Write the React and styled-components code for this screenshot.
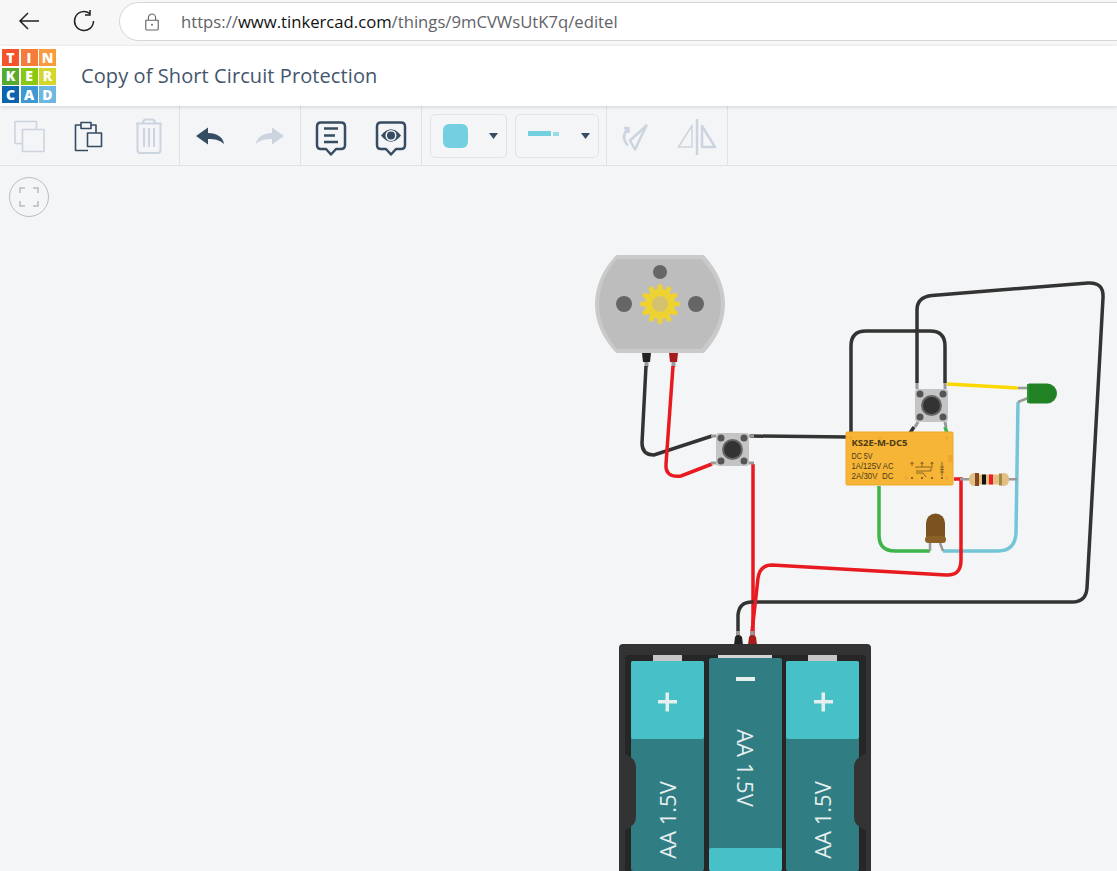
import React from "react";
import styled, { createGlobalStyle } from "styled-components";

const GlobalStyle = createGlobalStyle`
  html, body { margin: 0; padding: 0; background: #f3f5f7; }
  body { font-family: "Open Sans", "Noto Sans", sans-serif; overflow: hidden; }
`;

const LOGO = [
  ["T", "#f4532d"], ["I", "#f57d3c"], ["N", "#f99a3d"],
  ["K", "#56ab2f"], ["E", "#8cc811"], ["R", "#d3d62b"],
  ["C", "#0a64ae"], ["A", "#3d98d3"], ["D", "#6cb8e0"],
];

// wires of the circuit, page coordinates
const WIRES = [
  { c: "#333", d: "M646 366 L642 443 Q642 455 654 455 L712 436" },
  { c: "#e8191f", d: "M673 366 L666 464 Q665 478 681 476 L712 464" },
  { c: "#333", d: "M750 436 L848 437" },
  { c: "#e8191f", d: "M753 464 L753 636" },
  { c: "#333", d: "M851 433 L851 346 Q851 331 866 331 L930 331 Q945 331 945 346 L945 383" },
  { c: "#333", d: "M917 383 L917 310 Q917 297 932 295.500 L1088 283 Q1104 282 1103 298 L1087 588 Q1086 602 1072 602 L752 602 Q739 602 738 615 L738 632" },
  { c: "#333", d: "M914 427 L910 433" },
  { c: "#3db54a", d: "M945 427 L947 433" },
  { c: "#fdd800", d: "M947 384 L1018 388" },
  { c: "#74c5d8", d: "M1018 402 L1016 533 Q1015 551 998 551 L943 551" },
  { c: "#3db54a", d: "M879 486 L879 535 Q879 551 895 551 L930 551" },
  { c: "#e8191f", d: "M954 479 L961 479 L961 560 Q961 576 946 575 L772 565 Q760 565 758 578 L752 632" },
];

const RELAY_LINES = [
  ["DC 5V", 21],
  ["1A/125V AC", 42],
  ["2A/30V  DC", 42],
];

const RELAY_PINS = [[851, 438], [880, 438], [947, 438], [906, 478], [947, 478], [876, 478]];

const Gear = () => (
  <g>
    {Array.from({ length: 12 }, (_, i) => {
      const a = (i * Math.PI) / 6 + Math.PI / 2;
      return (
        <line
          key={i}
          x1={660 + Math.cos(a) * 13}
          y1={304 + Math.sin(a) * 13}
          x2={660 + Math.cos(a) * 17.500}
          y2={304 + Math.sin(a) * 17.500}
          stroke="#eed232"
          strokeWidth="5"
          strokeLinecap="round"
        />
      );
    })}
    <circle cx="660" cy="304" r="15" fill="#eed232" />
    <circle cx="660" cy="304" r="8" fill="#d3c270" />
  </g>
);

const PushButton = ({ x, y, vertical }) => (
  <g>
    {vertical ? (
      <path
        d={`M${x + 2} ${y - 6} V${y} M${x + 30} ${y - 6} V${y} M${x + 3} ${y + 33} L${x} ${y + 38} M${x + 30} ${y + 33} L${x + 31} ${y + 38}`}
        stroke="#999"
        strokeWidth="3"
      />
    ) : (
      <path
        d={`M${x - 5} ${y + 3} H${x} M${x + 33} ${y + 3} H${x + 38} M${x - 5} ${y + 30} H${x} M${x + 33} ${y + 30} H${x + 38}`}
        stroke="#999"
        strokeWidth="3"
      />
    )}
    <rect x={x} y={y} width="33" height="33" rx="3" fill="#c4c4c4" />
    <circle cx={x + 5} cy={y + 5} r="3.500" fill="#555" />
    <circle cx={x + 28} cy={y + 5} r="3.500" fill="#555" />
    <circle cx={x + 5} cy={y + 28} r="3.500" fill="#555" />
    <circle cx={x + 28} cy={y + 28} r="3.500" fill="#555" />
    <circle cx={x + 16.5} cy={y + 16.5} r="10.500" fill="#666" />
    <circle cx={x + 16.5} cy={y + 16.5} r="8.500" fill="#333" />
  </g>
);

const Cell = ({ x, y, h, capTop, capH, fill = "#317d84", cap = "#47c1c7" }) => (
  <g>
    <rect x={x} y={y} width="73" height={h} rx="2" fill={fill} />
    <rect x={x} y={capTop} width="73" height={capH} rx="2" fill={cap} />
  </g>
);

const Circuit = () => (
  <CircuitSvg viewBox="0 166 1117 705">
    {/* motor */}
    <path
      d="M617 257 L703 257 Q723 279 723 304 Q723 329 703 351 L617 351 Q597 329 597 304 Q597 279 617 257Z"
      fill="#cacaca"
      stroke="#cacaca"
      strokeWidth="4"
      strokeLinejoin="round"
    />
    <path
      d="M617 259 L701 259 Q721 280 721 304 Q721 328 701 349 L617 349 Q599 328 599 304 Q599 280 617 259Z"
      fill="#bdbdbd"
    />
    <circle cx="660" cy="272" r="7" fill="#666" />
    <circle cx="624" cy="304" r="8" fill="#666" />
    <circle cx="696" cy="304" r="8" fill="#666" />
    <Gear />
    <path d="M642 353 H651 L650 362 H643Z" fill="#222" />
    <path d="M669 353 H678 L677 362 H670Z" fill="#a81c1c" />
    <rect x="644.500" y="362" width="4" height="5" fill="#999" />
    <rect x="671.500" y="362" width="4" height="5" fill="#999" />

    {WIRES.map((w, i) => (
      <Wire key={i} d={w.d} $color={w.c} />
    ))}

    <PushButton x={716} y={433} />
    <PushButton x={915} y={389} vertical />

    {/* relay */}
    <rect x="846" y="432" width="107" height="53" rx="1" fill="#f7b538" stroke="#eda82a" />
    <RelayTitle x="851.500" y="446" textLength="56" lengthAdjust="spacingAndGlyphs">KS2E-M-DC5</RelayTitle>
    {RELAY_LINES.map(([line, w], i) => (
      <RelayText key={line} x="851.500" y={458.5 + i * 10} textLength={w} lengthAdjust="spacingAndGlyphs">
        {line}
      </RelayText>
    ))}
    {RELAY_PINS.map(([x, y]) => (
      <circle key={x + "-" + y} cx={x} cy={y} r="1.300" fill="none" stroke="#e3a030" strokeWidth="0.600" />
    ))}
    <rect x="948" y="455" width="5" height="7" fill="#eda82a" />
    <g stroke="#6b5420" strokeWidth="0.800" fill="none">
      <path d="M912 462 V466 M910.500 464 L912 462 L913.500 464 M922 462 V467 M920.500 464 L922 462 L923.500 464 M932 462 V468 M930.500 464 L932 462 L933.500 464" />
      <path d="M916 468 V467 H931 M916 471 H931 V468 M916 473 L923 473 L926 477" />
      <path d="M911 477 L913 479 M913 477 L911 479 M921 477 L923 479 M923 477 L921 479 M931 477 L933 479 M933 477 L931 479 M941 477 L943 479 M943 477 L941 479" />
      <path d="M942 462 V476 M940 467 H944 M940 469.500 H944 M940 472 H944" />
    </g>

    {/* resistor */}
    <rect x="960" y="478" width="57" height="2.500" fill="#999" />
    <path
      d="M974 473 Q976 473 978 474.500 H1000 Q1002 473 1004 473 Q1009 473 1009 479.500 Q1009 486 1004 486 Q1002 486 1000 484.500 H978 Q976 486 974 486 Q969 486 969 479.500 Q969 473 974 473Z"
      fill="#e1bf85"
    />
    <rect x="975" y="473" width="4" height="13" fill="#85471d" />
    <rect x="982" y="474.500" width="4" height="10" fill="#111" />
    <rect x="989" y="474.500" width="4" height="10" fill="#ee1c25" />
    <rect x="999" y="473.500" width="3" height="12" fill="#a5893e" />

    {/* green led */}
    <path d="M1018 388 L1028 388 M1018 402 L1028 398" stroke="#999" strokeWidth="2.500" />
    <path d="M1027 386 Q1027 383 1030 383.500 L1047 383.500 A10 10 0 0 1 1047 403.500 L1030 403.500 Q1027 403.500 1027 401Z" fill="#218225" />
    <rect x="1027" y="384" width="2" height="19" rx="1" fill="#2d9132" />

    {/* brown led */}
    <path d="M930 543 L930 551 M940 543 L943 551" stroke="#999" strokeWidth="2.500" />
    <path d="M926 540 L926 523 A9.500 9.500 0 0 1 945 523 L945 540Z" fill="#7c531f" />
    <rect x="925" y="536" width="21" height="7" rx="3.500" fill="#8a6027" />

    {/* battery holder */}
    <rect x="736" y="631" width="4" height="6" fill="#999" />
    <rect x="750" y="631" width="4" height="6" fill="#999" />
    <path d="M735 637 Q736 635 738 635 Q741 635 742 637 L743 645 H734Z" fill="#222" />
    <path d="M749 637 Q750 635 752 635 Q755 635 756 637 L757 645 H748Z" fill="#a81c1c" />
    <path d="M619 648 Q619 644 623 644 L867 644 Q871 644 871 648 L871 871 L619 871Z" fill="#333" />
    <path d="M625 658 Q625 655 628 655 L862 655 Q866 655 866 658 L866 871 L625 871Z" fill="#262626" />
    <rect x="653" y="655" width="29" height="7" fill="#c6c6c6" />
    <rect x="808" y="655" width="29" height="7" fill="#c6c6c6" />
    <rect x="718" y="655" width="54" height="4" fill="#d4d4d4" />
    <Cell x={631} y={661} h={210} capTop={661} capH={78} />
    <Cell x={709} y={658} h={213} capTop={848} capH={23} />
    <Cell x={786} y={661} h={210} capTop={661} capH={78} />
    <path d="M619 750 L630 757 Q636 760 636 768 L636 816 Q636 824 630 827 L619 834Z" fill="#333" />
    <path d="M871 750 L860 757 Q854 760 854 768 L854 816 Q854 824 860 827 L871 834Z" fill="#333" />
    <g fill="#e6eeee">
      <rect x="658" y="700" width="19" height="3.500" />
      <rect x="665.500" y="692.500" width="3.500" height="19" />
      <rect x="814" y="700" width="19" height="3.500" />
      <rect x="821.500" y="692.500" width="3.500" height="19" />
      <rect x="736" y="677" width="19" height="4" />
    </g>
    <CellLabel transform="translate(676 820) rotate(-90)">AA 1.5V</CellLabel>
    <CellLabel transform="translate(831 820) rotate(-90)">AA 1.5V</CellLabel>
    <CellLabel transform="translate(737 768) rotate(90)">AA 1.5V</CellLabel>
  </CircuitSvg>
);

const Icon = ({ children, light }) => (
  <IconSvg viewBox="0 0 40 40" $light={light}>
    {children}
  </IconSvg>
);

const Caret = () => (
  <CaretSvg viewBox="0 0 9 6">
    <path d="M0 0 H9 L4.500 6Z" />
  </CaretSvg>
);

const BUBBLE = "M10 6.500 H30 Q34 6.500 34 10.500 V29 Q34 33 30 33 H25 L20 38.500 L15 33 H10 Q6 33 6 29 V10.500 Q6 6.500 10 6.500Z";

export default function App() {
  return (
    <Page>
      <GlobalStyle />
      <BrowserBar>
        <NavIcon viewBox="0 0 24 24">
          <path d="M22 12 H3 M11 4 L3 12 L11 20" />
        </NavIcon>
        <NavIcon viewBox="0 0 24 24">
          <path d="M21.500 12 A9.500 9.500 0 1 1 17.500 4.300 M18 1 V6 H13" />
        </NavIcon>
        <AddressPill>
          <LockIcon viewBox="0 0 18 20">
            <path d="M2 8 H16 V18 Q16 19 15 19 H3 Q2 19 2 18Z M5 8 V5 A4 4 0 0 1 13 5 V8" />
            <circle cx="9" cy="13" r="1" fill="#555" stroke="none" />
          </LockIcon>
          <Url>
            https://<strong>www.tinkercad.com</strong>/things/9mCVWsUtK7q/editel
          </Url>
        </AddressPill>
      </BrowserBar>

      <Header>
        <Logo>
          {LOGO.map(([l, c]) => (
            <LogoTile key={l} $bg={c}>{l}</LogoTile>
          ))}
        </Logo>
        <Title>Copy of Short Circuit Protection</Title>
      </Header>

      <Toolbar>
        <Group $width={180}>
          <ToolButton>
            <Icon light>
              <rect x="5" y="5.500" width="21.500" height="22" />
              <rect x="12.500" y="13.500" width="21.500" height="22" fill="#f3f5f7" />
            </Icon>
          </ToolButton>
          <ToolButton>
            <Icon>
              <path d="M11 9 H5.500 V34.500 H18 M21 9 H26 V17" />
              <rect x="11" y="6.500" width="10" height="6" />
              <rect x="17.500" y="17" width="14" height="13.500" />
            </Icon>
          </ToolButton>
          <ToolButton>
            <Icon light>
              <path d="M7 7.500 H33 M14 7 Q14 3.500 17 3.500 H23 Q26 3.500 26 7" strokeWidth="2" />
              <path d="M8.500 8 V34 Q8.500 37 11.500 37 H28.500 Q31.500 37 31.500 34 V8" strokeWidth="2" />
              <path d="M15 12 V31 M20 12 V31 M25 12 V31" strokeWidth="2" />
            </Icon>
          </ToolButton>
        </Group>
        <Group $width={121}>
          <ToolButton>
            <FilledIcon viewBox="0 0 40 40">
              <path d="M6 20 L18 11.500 V17 C27 17 33 21 34 28 C30 24 25 23 18 23 V28.500Z" />
            </FilledIcon>
          </ToolButton>
          <ToolButton>
            <FilledIcon viewBox="0 0 40 40" $light>
              <path d="M34 20 L22 11.500 V17 C13 17 7 21 6 28 C10 24 15 23 22 23 V28.500Z" />
            </FilledIcon>
          </ToolButton>
        </Group>
        <Group $width={121}>
          <ToolButton>
            <Icon>
              <path d={BUBBLE} strokeWidth="2.500" />
              <path d="M13 12.500 H27 M13 19.500 H24 M13 26 H27" strokeWidth="2.500" />
            </Icon>
          </ToolButton>
          <ToolButton>
            <Icon>
              <path d={BUBBLE} strokeWidth="2.500" />
              <path d="M10 19.500 Q20 7 30 19.500 Q20 32 10 19.500Z" fill="#364c63" stroke="none" />
              <circle cx="20" cy="19.500" r="5.500" fill="#f3f5f7" stroke="none" />
              <circle cx="20" cy="19.500" r="4" fill="#364c63" stroke="none" />
            </Icon>
          </ToolButton>
        </Group>
        <StyleGroup $width={185}>
          <Picker $width={77}>
            <Swatch />
            <Caret />
          </Picker>
          <Picker $width={84}>
            <LineSample>
              <LineDash $width={23} />
              <LineDash $width={6} $faded />
            </LineSample>
            <Caret />
          </Picker>
        </StyleGroup>
        <Group $width={121}>
          <ToolButton>
            <Icon light>
              <path d="M29.500 9.500 L13 24.500 L18 33.500Z" strokeWidth="2.500" />
              <path d="M11 13 Q3 21 11 29.500 M7 12 H11.500 V17" strokeWidth="2.500" />
            </Icon>
          </ToolButton>
          <ToolButton>
            <Icon light>
              <path d="M15 9.500 L1.500 31 H15Z" strokeWidth="1.500" />
              <path d="M20 3 V39" strokeWidth="2.500" />
              <path d="M25 10 L38 31 H25Z" strokeWidth="2.500" />
            </Icon>
          </ToolButton>
        </Group>
      </Toolbar>

      <Canvas>
        <Circuit />
        <FitButton>
          <FitIcon viewBox="0 0 20 20">
            <path d="M1 6 V1 H6 M14 1 H19 V6 M19 14 V19 H14 M6 19 H1 V14" />
          </FitIcon>
        </FitButton>
      </Canvas>
    </Page>
  );
}

const Page = styled.div`
  width: 1117px;
  height: 871px;
  display: flex;
  flex-direction: column;
  overflow: hidden;
  background: #f3f5f7;
`;

const BrowserBar = styled.div`
  height: 46px;
  flex: none;
  display: flex;
  align-items: flex-start;
  gap: 31px;
  padding: 9px 0 0 17px;
  box-sizing: border-box;
  background: #f7f7f7;
`;

const NavIcon = styled.svg`
  width: 24px;
  height: 24px;
  fill: none;
  stroke: #222;
  stroke-width: 1.500;
`;

const AddressPill = styled.div`
  flex: 1;
  height: 39px;
  margin: -7px -40px 0 -8px;
  padding-left: 24px;
  display: flex;
  align-items: center;
  gap: 21px;
  box-sizing: border-box;
  background: #fff;
  border: 1.500px solid #d6d6d6;
  border-radius: 20px;
`;

const LockIcon = styled.svg`
  width: 16px;
  height: 18px;
  fill: none;
  stroke: #666;
  stroke-width: 1.300;
`;

const Url = styled.span`
  font-size: 16.680px;
  color: #5f6368;
  white-space: nowrap;

  strong {
    font-weight: 400;
    color: #111;
  }
`;

const Header = styled.header`
  height: 60px;
  flex: none;
  position: relative;
  display: flex;
  align-items: center;
  gap: 25px;
  padding-left: 2px;
  background: #fff;
  box-shadow: 0 1px 4px rgba(0, 0, 0, 0.15);
`;

const Logo = styled.div`
  display: grid;
  grid-template-columns: repeat(3, 17px);
  grid-auto-rows: 17px;
  gap: 1.500px;
`;

const LogoTile = styled.span`
  display: flex;
  align-items: center;
  justify-content: center;
  background: ${(p) => p.$bg};
  color: #fff;
  font-family: "Open Sans", sans-serif;
  font-size: 14px;
  font-weight: 800;
  line-height: 1;
`;

const Title = styled.h1`
  margin: -2px 0 0;
  font-size: 20px;
  font-weight: 400;
  color: #44566c;
  letter-spacing: 0.090px;
`;

const Toolbar = styled.div`
  height: 60px;
  flex: none;
  display: flex;
  box-sizing: border-box;
  border-bottom: 1px solid #dfe3e7;
  background: #f3f5f7;
`;

const Group = styled.div`
  width: ${(p) => p.$width}px;
  box-sizing: border-box;
  display: flex;
  border-right: 1px solid #dfe3e7;
`;

const StyleGroup = styled(Group)`
  align-items: center;
  gap: 8px;
  padding: 0 7px 0 8px;
`;

const ToolButton = styled.div`
  flex: 1;
  display: flex;
  align-items: center;
  justify-content: center;
`;

const IconSvg = styled.svg`
  width: 40px;
  height: 40px;
  fill: none;
  stroke: ${(p) => (p.$light ? "#ccd5df" : "#364c63")};
  stroke-width: 1.600;
  stroke-linejoin: round;
`;

const FilledIcon = styled.svg`
  width: 40px;
  height: 40px;
  fill: ${(p) => (p.$light ? "#ccd5df" : "#364c63")};
`;

const Picker = styled.div`
  width: ${(p) => p.$width}px;
  height: 44px;
  display: flex;
  align-items: center;
  justify-content: space-between;
  padding: 0 8px 0 12px;
  box-sizing: border-box;
  border: 1px solid #e0e4e8;
  border-radius: 5px;
`;

const Swatch = styled.div`
  width: 25px;
  height: 24px;
  border-radius: 6px;
  background: #72d0e0;
`;

const LineSample = styled.div`
  display: flex;
  align-items: center;
  gap: 2px;
  margin-bottom: 4px;
`;

const LineDash = styled.div`
  width: ${(p) => p.$width}px;
  height: ${(p) => (p.$faded ? 4 : 5)}px;
  background: ${(p) => (p.$faded ? "#96dce8" : "#72d0e0")};
`;

const CaretSvg = styled.svg`
  width: 9px;
  height: 6px;
  fill: #364c63;
`;

const Canvas = styled.main`
  flex: 1;
  position: relative;
  min-height: 0;
`;

const CircuitSvg = styled.svg`
  display: block;
  width: 1117px;
  height: 705px;
`;

const Wire = styled.path`
  fill: none;
  stroke: ${(p) => p.$color};
  stroke-width: 3.500;
`;

const RelayTitle = styled.text`
  font-family: "Open Sans", sans-serif;
  font-size: 9.500px;
  font-weight: 700;
  fill: #4a3a16;
`;

const RelayText = styled.text`
  font-family: "Liberation Sans", sans-serif;
  font-size: 8.500px;
  fill: #4a3a16;
  white-space: pre;
`;

const CellLabel = styled.text`
  font-family: "Open Sans", sans-serif;
  font-size: 22px;
  fill: #e6eeee;
  text-anchor: middle;
`;

const FitButton = styled.div`
  position: absolute;
  left: 9px;
  top: 11px;
  width: 40px;
  height: 40px;
  display: flex;
  align-items: center;
  justify-content: center;
  box-sizing: border-box;
  border: 1px solid #bdbdbd;
  border-radius: 50%;
`;

const FitIcon = styled.svg`
  width: 20px;
  height: 20px;
  fill: none;
  stroke: #b4bcc5;
  stroke-width: 1.500;
`;
